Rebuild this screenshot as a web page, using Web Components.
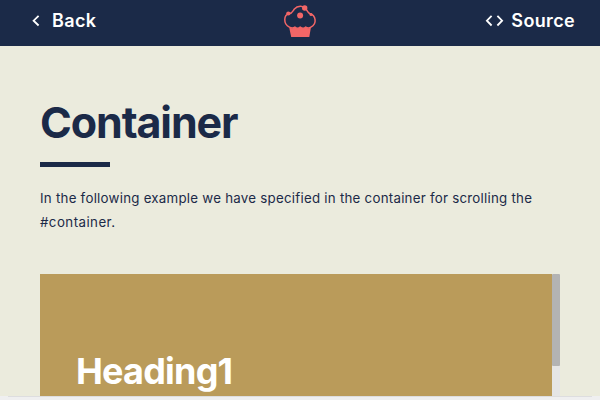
<!DOCTYPE html>
<html lang="en"><head><meta charset="utf-8"><title>Container</title>
<style>
html,body{margin:0;height:100%;overflow:hidden;background:#ebebdd}
body{font-family:Inter,"Liberation Sans",sans-serif;color:#1b2a48}
</style></head><body>
<demo-page>
  <nav-bar slot="nav">
    <nav-link slot="start" icon="back">Back</nav-link>
    <cupcake-logo slot="logo"></cupcake-logo>
    <nav-link slot="end" icon="code">Source</nav-link>
  </nav-bar>
  <page-title>Container</page-title>
  <page-copy>In the following example we have specified in the container for scrolling the <span style="letter-spacing:.45px">#container.</span></page-copy>
  <scroll-panel>Heading1</scroll-panel>
</demo-page>
<script>
function define(name, html, setup){
  customElements.define(name, class extends HTMLElement{
    connectedCallback(){
      if(this.shadowRoot) return;
      this.attachShadow({mode:'open'}).innerHTML = html;
      if(setup) setup(this);
    }
  });
}
define('demo-page', `<style>
:host{display:flex;flex-direction:column;height:400px;width:600px;overflow:hidden}
main{flex:1;min-height:0;display:flex;flex-direction:column;padding:0 40px}
footer{height:4px;background:#efeff0;padding:0 8px;flex:none}
footer div{height:1px;background:#dddddf}
</style><slot name="nav"></slot><main><slot></slot></main><footer><div></div></footer>`);
define('nav-bar', `<style>
:host{display:grid;grid-template-columns:1fr auto 1fr;align-items:center;height:46px;flex:none;box-sizing:border-box;padding:0 25px 4px 30px;background:#1b2a48;color:#fff}
.l{justify-self:start}.r{justify-self:end}.m{padding-right:4.5px}
div{display:flex}
</style><div class="l"><slot name="start"></slot></div><div class="m"><slot name="logo"></slot></div><div class="r"><slot name="end"></slot></div>`);
define('nav-link', `<style>
:host{display:flex;align-items:center;font-weight:600;font-size:18px;line-height:24px;letter-spacing:.35px}
svg{display:block;fill:none;stroke:#fff;stroke-width:1.8}
.back{margin-right:10px}.code{margin-right:7px}
</style><svg></svg><slot></slot>`, el => {
  const svg = el.shadowRoot.querySelector('svg'), back = el.getAttribute('icon') === 'back';
  svg.setAttribute('class', back ? 'back' : 'code');
  svg.setAttribute('width', back ? 12 : 19);
  svg.setAttribute('height', 12);
  svg.innerHTML = back ? '<path d="M8.6 .9 3.6 5.7l5 4.8"/>' : '<path d="M6.6 .9 1.9 5.7l4.7 4.8M12.4 .9 17.1 5.7l-4.7 4.8"/>';
});
define('cupcake-logo', `<style>:host{display:block}svg{display:block}</style>
<svg width="34" height="34" viewBox="0 0 34 34"><g transform="translate(.4 1)">
<path d="M6 22.2C-.5 19 .2 9.5 5.8 8.8C8.5 8.6 9.5 6 11 4C14 .5 20 .5 22.2 3.5C23.7 5.8 24.2 7.2 26.2 8.5C32.8 10.5 33.8 18.8 27.5 22.2C25.5 23.4 23.8 23 22.3 22.1C20.5 23.7 18.8 23.5 16.8 22.1C15.2 23.5 13.5 23.7 11.5 22.1C10 23.2 8 23.2 6 22.2Z" fill="none" stroke="#f26667" stroke-width="1.5"/>
<path d="M5.8 22.5Q8.5 24 11.5 22.6Q14 24 16.8 22.6Q20 24 22.3 22.6Q25 24 27.5 22.5L25.9 32H7.8Z" fill="#f26667"/>
<g fill="#f26667"><circle cx="16.7" cy="10.5" r="3"/><circle cx="4.9" cy="8.5" r="2.1"/><circle cx="21.3" cy="3" r="2.7"/><circle cx="27.6" cy="9.4" r="1.5"/></g></g></svg>`);
define('page-title', `<style>
:host{display:block;margin-top:50px}
h1{margin:0;font-size:43px;line-height:52px;font-weight:650;letter-spacing:-1.1px}
h1::after{content:"";display:block;width:70px;height:5px;margin-top:14px;background:#1b2a48}
</style><h1><slot></slot></h1>`);
define('page-copy', `<style>:host{display:block;margin-top:19px;font-size:13.3px;line-height:24px;letter-spacing:.25px}</style><slot></slot>`);
define('scroll-panel', `<style>
:host{display:flex;flex:1;min-height:0;margin-top:40px;overflow:hidden}
.view{width:512px;background:#ba9b5a;color:#fff}
h2{margin:75px 0 0 36px;font-size:36px;line-height:44px;font-weight:650;letter-spacing:-.8px}
.track{width:8px;background:#e5e5e5}.thumb{height:92px;border-radius:1px;background:#b3b3b3}
</style><div class="view"><h2><slot></slot></h2></div><div class="track"><div class="thumb"></div></div>`);
</script></body></html>
